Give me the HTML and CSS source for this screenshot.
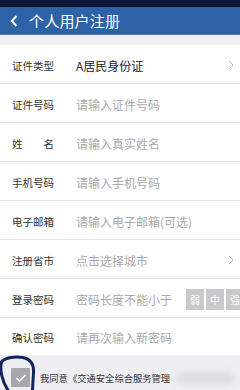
FILE: index.html
```html
<!DOCTYPE html>
<html lang="zh">
<head>
<meta charset="utf-8">
<link rel="stylesheet" href="styles.css">
</head>
<body>
<div class="app">
  <div class="status"></div>
  <div class="header">
    <svg class="back" width="8" height="12" viewBox="0 0 8 12"><path d="M6.5 1 L1.8 6 L6.5 11" fill="none" stroke="#fff" stroke-width="2"/></svg>
    <span class="title">个人用户注册</span>
  </div>
  <div class="gap"></div>
  <div class="form">
    <div class="row"><span class="label">证件类型</span><span class="value">A居民身份证</span><svg class="chev" width="6" height="10" viewBox="0 0 6 10"><path d="M1 1 L5 5 L1 9" fill="none" stroke="#b5b5b5" stroke-width="1"/></svg></div>
    <div class="row"><span class="label">证件号码</span><span class="ph">请输入证件号码</span></div>
    <div class="row"><span class="label spread"><span>姓</span><span>名</span></span><span class="ph">请输入真实姓名</span></div>
    <div class="row"><span class="label">手机号码</span><span class="ph">请输入手机号码</span></div>
    <div class="row"><span class="label">电子邮箱</span><span class="ph">请输入电子邮箱(可选)</span></div>
    <div class="row"><span class="label">注册省市</span><span class="ph">点击选择城市</span><svg class="chev" width="6" height="10" viewBox="0 0 6 10"><path d="M1 1 L5 5 L1 9" fill="none" stroke="#b5b5b5" stroke-width="1"/></svg></div>
    <div class="row"><span class="label">登录密码</span><span class="ph">密码长度不能小于</span>
      <span class="strength"><span class="lvl">弱</span><span class="lvl">中</span><span class="lvl">强</span></span></div>
    <div class="row last"><span class="label">确认密码</span><span class="ph">请再次输入新密码</span></div>
  </div>
  <div class="agree">
    <span class="box"><svg width="12" height="10" viewBox="0 0 12 10"><path d="M1.5 5 L4.5 8 L10.5 2" fill="none" stroke="#fff" stroke-width="1.6"/></svg></span>
    <span class="agree-text">我同意《交通安全综合服务管理</span>
    <span class="blur"></span>
    <svg class="circle" width="40" height="37" viewBox="0 0 40 37"><path d="M0.5 8 C4 3 14 1 23 2.5 C31 4 34 10 33.5 18 C33 26 32.5 31 32.5 37 M1.5 7 C-0.5 14 2 27 8.5 36" fill="none" stroke="#13245e" stroke-width="3" stroke-linecap="round"/></svg>
  </div>
</div>
</body>
</html>
```
FILE: styles.css
```css
* { box-sizing: border-box; }
html, body { margin: 0; padding: 0; }
body { width: 240px; height: 390px; overflow: hidden; background: #fff; font-family: "Noto Sans CJK SC", "Noto Sans", sans-serif; }
.app { display: flex; flex-direction: column; height: 390px; }
.status { height: 7px; background: #0e1736; }
.header { height: 28px; background: #2d62a6; display: flex; align-items: center; padding-left: 10px; border-bottom: 1px solid #4a7cbc; }
.back { margin-right: 11px; }
.title { color: #fff; font-size: 15px; line-height: 1; letter-spacing: 0.2px; }
.gap { height: 10px; background: #f1f1f5; }
.form { display: flex; flex-direction: column; }
.row { height: 39px; display: flex; align-items: center; padding: 2px 6px 0 12px; border-bottom: 1px solid #e2e2e6; overflow: hidden; }
.row.last { border-bottom: none; height: 37px; }
.label { width: 64px; flex: none; font-size: 10.5px; color: #333; }
.spread { display: flex; justify-content: space-between; padding-right: 22px; }
.value { flex: 1; font-size: 12px; color: #222; }
.ph { flex: 1; font-size: 12px; color: #a9a9ad; white-space: nowrap; overflow: hidden; }
.chev { flex: none; }
.strength { display: flex; gap: 2px; margin-right: -10px; flex: none; }
.lvl { width: 18px; height: 21px; background: #c9c9cb; color: #fff; font-size: 10px; display: flex; align-items: center; justify-content: center; }
.agree { flex: 1; background: #efeff3; position: relative; display: flex; align-items: center; padding: 10px 0 0 11px; }
.box { width: 19px; height: 19px; background: #a8a8ac; display: flex; align-items: center; justify-content: center; border-radius: 1px; }
.agree-text { margin-left: 10px; font-size: 9.3px; color: #333; white-space: nowrap; }
.blur { width: 58px; height: 12px; background: #dcdce2; border-radius: 6px; margin-left: 6px; filter: blur(3px); }
.circle { position: absolute; left: 0; top: 0; }
```
